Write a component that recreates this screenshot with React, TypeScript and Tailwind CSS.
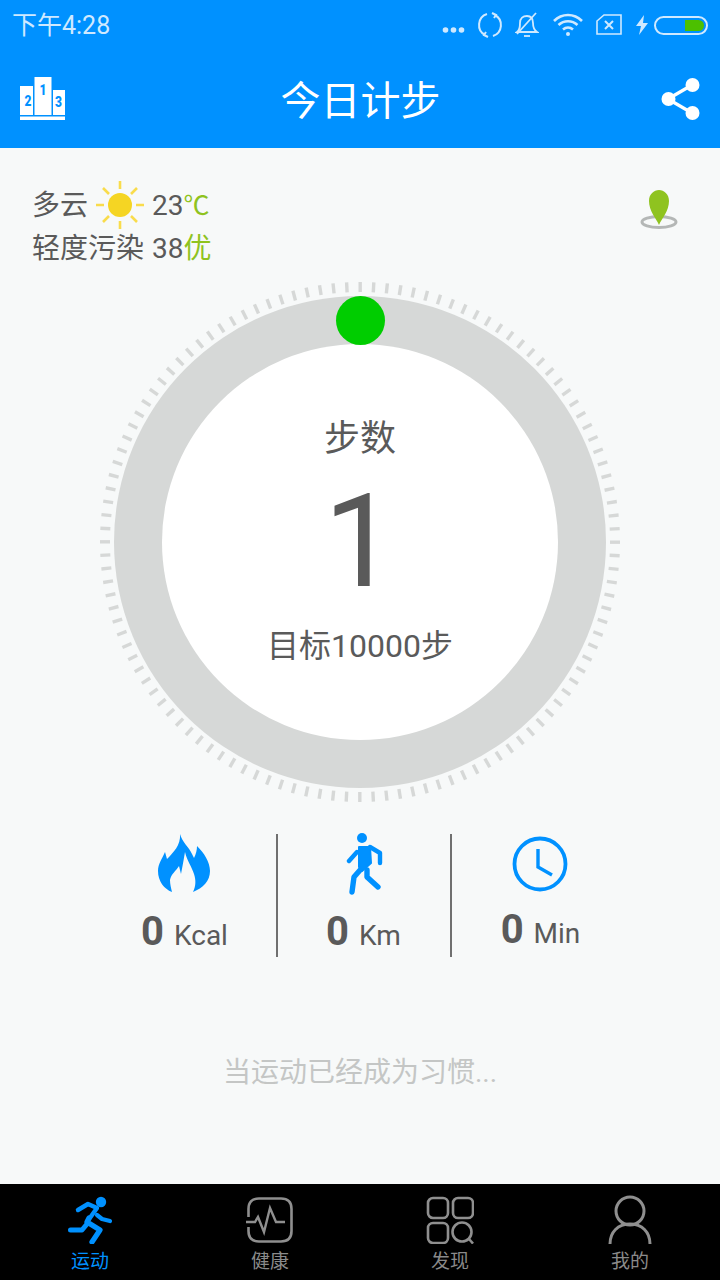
import React from 'react'

const cjk = "font-['Roboto','Noto_Sans_CJK_SC',sans-serif]"

function StatusIcons() {
  return (
    <div className="flex items-center">
      <svg width="24" height="8" viewBox="0 0 24 8" className="mt-[10px]">
        <circle cx="3.5" cy="4" r="2.8" fill="#cfe9ff" />
        <circle cx="11.5" cy="4" r="2.8" fill="#cfe9ff" />
        <circle cx="19.5" cy="4" r="2.8" fill="#cfe9ff" />
      </svg>
      <svg width="26" height="26" viewBox="0 0 26 26" fill="none" stroke="#cfe9ff" strokeWidth="2" className="ml-[11px]">
        <path d="M10 2 A11.5 11.5 0 0 0 8 23" />
        <path d="M16 24 A11.5 11.5 0 0 0 18 3" />
        <path d="M15 1 L19 3 L17 6" />
        <path d="M11 25 L7 23 L9 20" />
      </svg>
      <svg width="24" height="26" viewBox="0 0 24 26" fill="none" stroke="#cfe9ff" strokeWidth="1.8" className="ml-[12px]">
        <path d="M2 20 C5 18 5 15 5 11 C5 6 8 4 12 4 C16 4 18 7 18 11 C18 15 19 18 22 20 Z" />
        <path d="M2 22 L21 1" />
        <path d="M9 24 H15" />
      </svg>
      <svg width="32" height="24" viewBox="0 0 32 24" fill="none" stroke="#cfe9ff" strokeWidth="2.6" className="ml-[13px]">
        <path d="M2 8 C10 0 22 0 30 8" />
        <path d="M6.5 12 C12 7 20 7 25.5 12" />
        <path d="M11 16.5 C14 14 18 14 21 16.5" />
        <circle cx="16" cy="21" r="2" fill="#cfe9ff" stroke="none" />
      </svg>
      <svg width="26" height="22" viewBox="0 0 26 22" fill="none" stroke="#cfe9ff" strokeWidth="1.6" className="ml-[12px]">
        <path d="M1 7 L8 1 H25 V20 H1 Z" />
        <path d="M9 7 L17 15 M17 7 L9 15" strokeWidth="2" />
      </svg>
      <svg width="12" height="20" viewBox="0 0 12 20" className="ml-[14px]">
        <path d="M8 0 L0 11 H5 L3 20 L12 8 H7 Z" fill="#cfe9ff" />
      </svg>
      <div className="ml-[6px] flex h-[19px] w-[54px] justify-end rounded-full border-2 border-[#cfe9ff] p-[2px]">
        <div className="h-full w-[19px] rounded-r-full bg-[#4cc000]" />
      </div>
    </div>
  )
}

function Podium() {
  return (
    <svg width="46" height="44" viewBox="0 0 46 44" className="-mt-[2px]">
      <rect x="0" y="10" width="13" height="29" fill="#fff" />
      <rect x="14.5" y="1" width="17" height="38" fill="#fff" />
      <rect x="33" y="14" width="12" height="25" fill="#fff" />
      <rect x="0" y="40.5" width="45" height="3.5" fill="#fff" />
      <text transform="translate(8 29.5) scale(0.8 1)" textAnchor="middle" fontSize="15" fontWeight="900" fill="#0091ff" fontFamily="Roboto">2</text>
      <text transform="translate(23 18.5) scale(0.8 1)" textAnchor="middle" fontSize="15" fontWeight="900" fill="#0091ff" fontFamily="Roboto">1</text>
      <text transform="translate(38.5 30.5) scale(0.8 1)" textAnchor="middle" fontSize="15" fontWeight="900" fill="#0091ff" fontFamily="Roboto">3</text>
    </svg>
  )
}

function Share() {
  return (
    <svg width="40" height="44" viewBox="0 0 40 44">
      <path d="M7 22 L31 8 M7 22 L31 36" stroke="#fff" strokeWidth="3.2" />
      <circle cx="7.5" cy="22" r="7" fill="#fff" />
      <circle cx="31.5" cy="8" r="7" fill="#fff" />
      <circle cx="31.5" cy="36" r="7" fill="#fff" />
    </svg>
  )
}

function Sun() {
  return (
    <svg width="50" height="50" viewBox="0 0 50 50" stroke="#f9dc4c" strokeWidth="2.6">
      <circle cx="25" cy="25" r="12" fill="#f5d523" stroke="none" />
      <path d="M25 1 V9 M25 41 V49 M1 25 H9 M41 25 H49 M8 8 L14 14 M36 36 L42 42 M8 42 L14 36 M36 14 L42 8" />
    </svg>
  )
}

function Pin() {
  return (
    <svg width="40" height="42" viewBox="0 0 40 42">
      <ellipse cx="20" cy="33" rx="17" ry="5.5" fill="none" stroke="#b4b7b6" strokeWidth="3" />
      <path d="M20 36 C17 29 10 22 10 12 C10 5 15 1 20 1 C25 1 30 5 30 12 C30 22 23 29 20 36 Z" fill="#8fc31f" />
    </svg>
  )
}

function Ticks() {
  const ticks = Array.from({ length: 120 }, (_, i) => i * 3)
  return (
    <svg width="520" height="520" viewBox="0 0 520 520" className="absolute left-0 top-0">
      {ticks.map((a) => (
        <rect key={a} x="258.5" y="0" width="3.4" height="10" fill="#d6d8d7" transform={`rotate(${a} 260 260)`} />
      ))}
    </svg>
  )
}

function Flame() {
  return (
    <svg width="52" height="60" viewBox="0 0 52 60">
      <path
        d="M22 0 C24 8 31 13 34 20 L36 24 C38 20 39 16 39 12 C46 19 52 28 52 37 C52 47 45 54 35 58 C38 52 38 46 36 40 C34 33 29 27 27 18 C26 24 25 30 23 40 L21 32 C18 37 13 40 12 46 C12 50 13 54 14 58 C6 55 0 47 0 37 C0 30 4 25 7 18 L9 25 C15 19 23 11 22 0 Z"
        fill="#0091ff"
      />
    </svg>
  )
}

function Walker() {
  return (
    <svg width="40" height="62" viewBox="0 0 40 62" fill="none" stroke="#0091ff" strokeLinecap="round" strokeLinejoin="round" className="ml-[6px]">
      <circle cx="16" cy="5" r="5" fill="#0091ff" stroke="none" />
      <path d="M13 14 H24 L25 30 L16 38 L13 34 Z" fill="#0091ff" stroke="#0091ff" strokeWidth="2" />
      <path d="M24 14 L34 20 V30" strokeWidth="4.4" />
      <path d="M11 19 L3 28" strokeWidth="4.4" />
      <path d="M15 36 L8 44 L6 59" strokeWidth="5.4" />
      <path d="M21 37 V44 L32 54" strokeWidth="5.4" />
    </svg>
  )
}

function Clock() {
  return (
    <svg width="56" height="56" viewBox="0 0 56 56" fill="none" stroke="#0091ff">
      <circle cx="28" cy="28" r="25.5" strokeWidth="3.8" />
      <path d="M26 13 V31 L40 39" strokeWidth="3.4" />
    </svg>
  )
}

function Stat({ icon, value, unit, top }: { icon: React.ReactNode; value: string; unit: string; top: string }) {
  return (
    <div className="flex flex-col items-center">
      <div className="flex h-[60px] items-center">{icon}</div>
      <div className={`flex items-baseline text-[#5a5a5a] ${top}`}>
        <span className="text-[40px] leading-[46px] font-bold">{value}</span>
        <span className="ml-[10px] text-[28px] leading-[46px]">{unit}</span>
      </div>
    </div>
  )
}

function Tab({ icon, label, active }: { icon: React.ReactNode; label: string; active?: boolean }) {
  return (
    <div className="flex flex-col items-center">
      <div className="flex h-[48px] items-center">{icon}</div>
      <span className={`mt-[5px] text-[19px] leading-[26px] ${active ? 'text-[#0091ff]' : 'text-[#8a8a8a]'}`}>{label}</span>
    </div>
  )
}

export default function App() {
  return (
    <div className={`flex h-[1280px] w-[720px] flex-col overflow-hidden bg-[#f7f9f9] ${cjk}`}>
      <header className="h-[148px] shrink-0 bg-[#0091ff]">
        <div className="flex h-[50px] items-center justify-between px-[12px]">
          <span className="pt-[2px] text-[25px] leading-[50px] text-[#cfe9ff]">下午4:28</span>
          <StatusIcons />
        </div>
        <div className="flex h-[98px] items-center justify-between pl-[20px] pr-[19px]">
          <Podium />
          <h1 className="pt-[6px] pr-[6px] text-[40px] font-normal leading-[92px] text-white">今日计步</h1>
          <Share />
        </div>
      </header>

      <main className="flex flex-1 flex-col">
        <div className="flex items-start justify-between pl-[32px] pr-[41px] pt-[35px]">
          <div className="text-[28px] leading-[44px] text-[#5a5a5a]">
            <div className="flex items-center">
              <span className="pt-[1px]">多云</span>
              <span className="ml-[7px] mr-[7px] -mt-[1px] flex h-[44px] items-center"><Sun /></span>
              <span className="pt-[1px]">23<span className="text-[26px] text-[#8fc31f]">℃</span></span>
            </div>
            <div className="-mt-[1px]">
              轻度污染<span className="ml-[8px]">38</span><span className="text-[#8fc31f]">优</span>
            </div>
          </div>
          <div className="mt-[6px]"><Pin /></div>
        </div>

        <div className="relative mx-auto mt-[11px] h-[520px] w-[520px]">
          <Ticks />
          <div className="absolute left-[14px] top-[14px] flex h-[492px] w-[492px] items-center justify-center rounded-full bg-[#d6d8d7]">
            <div className="flex h-[396px] w-[396px] flex-col items-center rounded-full bg-white text-[#5a5a5a]">
              <span className="mt-[70px] text-[36px] leading-[50px]">步数</span>
              <span className="mt-[13px] text-[129px] leading-[130px]">1</span>
              <span className="mt-[16px] text-[32px] leading-[46px]">目标10000步</span>
            </div>
          </div>
          <div className="absolute left-[236px] top-[14px] h-[49px] w-[49px] rounded-full bg-[#00cd00]" />
        </div>

        <div className="mt-[32px] flex justify-center pl-[7px]">
          <div className="flex h-[123px] w-[173px] justify-center pr-[9px]">
            <Stat icon={<div className="-ml-[2px]"><Flame /></div>} value="0" unit="Kcal" top="mt-[15px]" />
          </div>
          <div className="h-[123px] w-[2px] bg-[#707070]" />
          <div className="flex h-[123px] w-[172px] justify-center">
            <Stat icon={<Walker />} value="0" unit="Km" top="mt-[15px]" />
          </div>
          <div className="h-[123px] w-[2px] bg-[#707070]" />
          <div className="flex h-[123px] w-[173px] justify-center pl-[5px]">
            <Stat icon={<Clock />} value="0" unit="Min" top="mt-[14px]" />
          </div>
        </div>

        <p className="mt-[96px] text-center text-[28px] leading-[40px] text-[#c4c6c5]">当运动已经成为习惯...</p>
      </main>

      <nav className="grid h-[96px] shrink-0 grid-cols-4 bg-black pt-[12px]">
        <Tab
          active
          label="运动"
          icon={
            <svg width="46" height="48" viewBox="0 0 46 48" fill="none" stroke="#0091ff" strokeLinecap="round" strokeLinejoin="round" className="ml-[2px]">
              <circle cx="33" cy="6" r="5.2" fill="#0091ff" stroke="none" />
              <path d="M10 14 L20 8 L29 12 L19 26" strokeWidth="4.4" />
              <path d="M29 19 L34 23 L42 25" strokeWidth="4.2" />
              <path d="M21 22 L19 26 L32 34 L24 46" strokeWidth="5.2" />
              <path d="M2.5 34 H14 L19 28" strokeWidth="5" />
            </svg>
          }
        />
        <Tab
          label="健康"
          icon={
            <svg width="48" height="48" viewBox="0 0 48 48" fill="none" stroke="#8f8f8f" strokeWidth="2.6">
              <path d="M2.5 21 V13 C2.5 6 6 2.5 13 2.5 H35 C42 2.5 45.5 6 45.5 13 V35 C45.5 42 42 45.5 35 45.5 H13 C6 45.5 2.5 42 2.5 35 V31" />
              <path d="M0 26 H9 L12 21 L18 36 L24 12 L30 26 H39" strokeWidth="2.4" />
            </svg>
          }
        />
        <Tab
          label="发现"
          icon={
            <svg width="48" height="48" viewBox="0 0 48 48" fill="none" stroke="#8f8f8f" strokeWidth="2.6">
              <rect x="2" y="2" width="20" height="20" rx="5" />
              <rect x="27" y="2" width="20" height="20" rx="5" />
              <rect x="2" y="27" width="20" height="20" rx="5" />
              <circle cx="36" cy="36" r="9.5" />
              <path d="M43 43 L47 47.5" />
            </svg>
          }
        />
        <Tab
          label="我的"
          icon={
            <svg width="44" height="50" viewBox="0 0 44 50" fill="none" stroke="#8f8f8f" strokeWidth="3">
              <circle cx="22" cy="16" r="14" />
              <path d="M2 49 C2 37 10 29 22 29 C34 29 42 37 42 49" />
            </svg>
          }
        />
      </nav>
    </div>
  )
}
